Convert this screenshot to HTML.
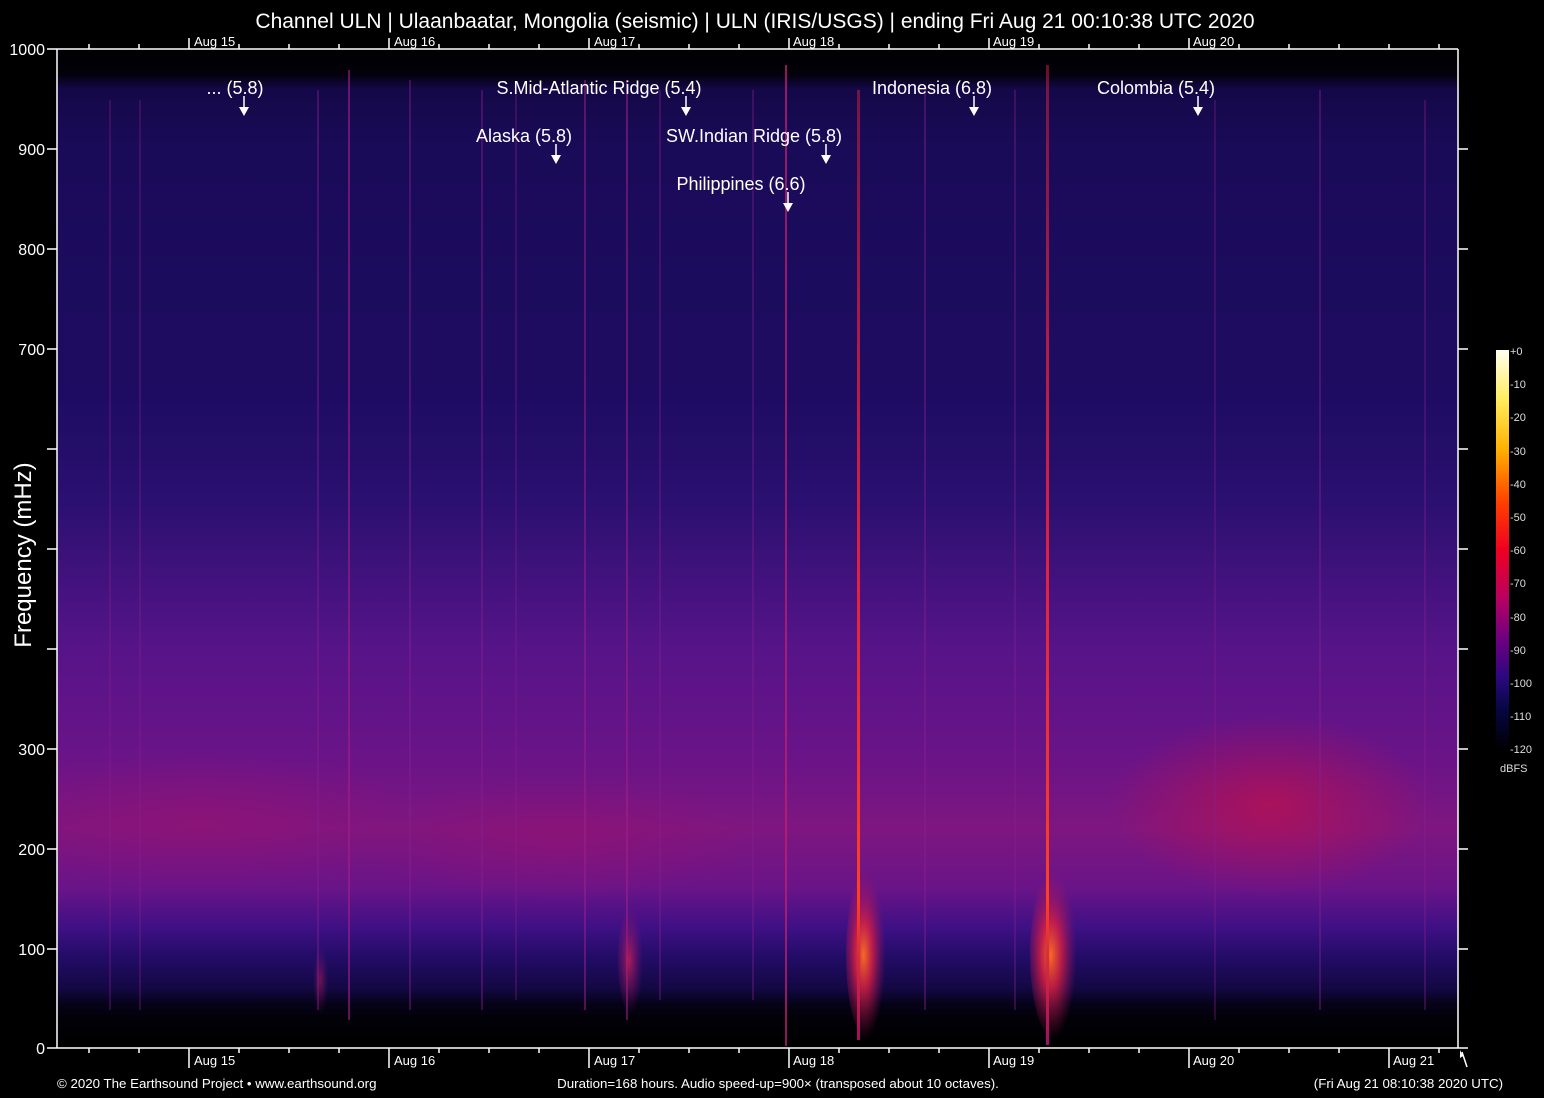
<!DOCTYPE html>
<html><head><meta charset="utf-8"><style>
html,body{margin:0;padding:0;background:#000;width:1544px;height:1098px;overflow:hidden}
svg{display:block}
text{font-family:"Liberation Sans",Arial,sans-serif;fill:#fff}
</style></head><body>
<svg width="1544" height="1098" viewBox="0 0 1544 1098" xmlns="http://www.w3.org/2000/svg">
<defs>
<clipPath id="pc"><rect x="57" y="49" width="1401" height="999"/></clipPath>
<linearGradient id="bg" x1="0" y1="49" x2="0" y2="1048" gradientUnits="userSpaceOnUse">
<stop offset="0" stop-color="#000"/>
<stop offset="0.025" stop-color="#03010a"/>
<stop offset="0.04" stop-color="#140848"/>
<stop offset="0.1" stop-color="#1a0b58"/>
<stop offset="0.35" stop-color="#1e0c62"/>
<stop offset="0.45" stop-color="#2a1070"/>
<stop offset="0.6" stop-color="#561488"/>
<stop offset="0.71" stop-color="#6a1488"/>
<stop offset="0.78" stop-color="#7e1680"/>
<stop offset="0.84" stop-color="#6a1488"/>
<stop offset="0.88" stop-color="#3e1084"/>
<stop offset="0.91" stop-color="#220c66"/>
<stop offset="0.94" stop-color="#140844"/>
<stop offset="0.955" stop-color="#06031a"/>
<stop offset="0.97" stop-color="#020108"/>
<stop offset="1" stop-color="#000"/>
</linearGradient>
<radialGradient id="blob" cx="0.5" cy="0.5" r="0.5">
<stop offset="0" stop-color="#c0104a" stop-opacity="0.7"/>
<stop offset="1" stop-color="#c0104a" stop-opacity="0"/>
</radialGradient>
<radialGradient id="blob2" cx="0.5" cy="0.5" r="0.5">
<stop offset="0" stop-color="#a0106a" stop-opacity="0.4"/>
<stop offset="1" stop-color="#a0106a" stop-opacity="0"/>
</radialGradient>
<radialGradient id="hot" cx="0.4" cy="0.5" r="0.5">
<stop offset="0" stop-color="#ff7020" stop-opacity="0.95"/>
<stop offset="0.4" stop-color="#e02040" stop-opacity="0.8"/>
<stop offset="1" stop-color="#a01060" stop-opacity="0"/>
</radialGradient>
<radialGradient id="warm" cx="0.4" cy="0.5" r="0.5">
<stop offset="0" stop-color="#c8205a" stop-opacity="0.8"/>
<stop offset="1" stop-color="#8a1070" stop-opacity="0"/>
</radialGradient>
<linearGradient id="cb" x1="0" y1="350" x2="0" y2="750" gradientUnits="userSpaceOnUse">
<stop offset="0" stop-color="#fffff0"/>
<stop offset="0.12" stop-color="#ffee60"/>
<stop offset="0.25" stop-color="#ffb000"/>
<stop offset="0.38" stop-color="#ff4000"/>
<stop offset="0.5" stop-color="#f00020"/>
<stop offset="0.62" stop-color="#b80060"/>
<stop offset="0.72" stop-color="#700080"/>
<stop offset="0.82" stop-color="#2a0880"/>
<stop offset="0.9" stop-color="#060640"/>
<stop offset="1" stop-color="#000"/>
</linearGradient>
<linearGradient id="vl" x1="0" y1="0" x2="0" y2="1">
<stop offset="0" stop-color="#d02040" stop-opacity="0.5"/>
<stop offset="0.5" stop-color="#e02040"/>
<stop offset="0.85" stop-color="#ff4020"/>
<stop offset="1" stop-color="#a01060"/>
</linearGradient>
</defs>

<g clip-path="url(#pc)">
<rect x="57" y="49" width="1401" height="999" fill="url(#bg)"/>
<ellipse cx="1270" cy="805" rx="160" ry="90" fill="url(#blob)"/>
<ellipse cx="200" cy="820" rx="220" ry="70" fill="url(#blob2)"/>
<ellipse cx="560" cy="840" rx="200" ry="60" fill="url(#blob2)"/>

<g stroke-width="2">
<line x1="349" y1="70" x2="349" y2="1020" stroke="#a0208a" stroke-opacity="0.6"/>
<line x1="318" y1="90" x2="318" y2="1010" stroke="#8a2090" stroke-opacity="0.4"/>
<line x1="410" y1="80" x2="410" y2="1010" stroke="#8a2090" stroke-opacity="0.4"/>
<line x1="482" y1="90" x2="482" y2="1010" stroke="#8a2090" stroke-opacity="0.4"/>
<line x1="516" y1="90" x2="516" y2="1000" stroke="#8a2090" stroke-opacity="0.3"/>
<line x1="585" y1="80" x2="585" y2="1010" stroke="#a0208a" stroke-opacity="0.5"/>
<line x1="627" y1="80" x2="627" y2="1020" stroke="#a0208a" stroke-opacity="0.55"/>
<line x1="660" y1="90" x2="660" y2="1000" stroke="#8a2090" stroke-opacity="0.35"/>
<line x1="753" y1="90" x2="753" y2="1000" stroke="#8a2090" stroke-opacity="0.35"/>
<line x1="786" y1="65" x2="786" y2="1046" stroke="#c02070" stroke-opacity="0.75"/>
<line x1="925" y1="90" x2="925" y2="1010" stroke="#8a2090" stroke-opacity="0.4"/>
<line x1="1015" y1="90" x2="1015" y2="1010" stroke="#8a2090" stroke-opacity="0.35"/>
<line x1="1320" y1="90" x2="1320" y2="1010" stroke="#8a2090" stroke-opacity="0.4"/>
<line x1="1425" y1="100" x2="1425" y2="1010" stroke="#8a2090" stroke-opacity="0.35"/>
<line x1="110" y1="100" x2="110" y2="1010" stroke="#8a2090" stroke-opacity="0.3"/>
<line x1="140" y1="100" x2="140" y2="1010" stroke="#8a2090" stroke-opacity="0.3"/>
<line x1="1215" y1="100" x2="1215" y2="1020" stroke="#8a2090" stroke-opacity="0.3"/>
</g>
<ellipse cx="632" cy="960" rx="14" ry="55" fill="url(#warm)"/>
<ellipse cx="322" cy="980" rx="8" ry="35" fill="url(#warm)" opacity="0.6"/>
<ellipse cx="868" cy="955" rx="22" ry="85" fill="url(#hot)"/>
<ellipse cx="1056" cy="955" rx="26" ry="85" fill="url(#hot)"/>
<rect x="857" y="90" width="3" height="950" fill="url(#vl)"/>
<rect x="1046" y="65" width="3" height="980" fill="url(#vl)"/>
</g>

<g stroke="#fff" stroke-width="1.5" fill="none">
<line x1="57" y1="49" x2="57" y2="1048"/>
<line x1="57" y1="49" x2="1458" y2="49"/>
<line x1="57" y1="1048" x2="1468" y2="1048"/>
<line x1="1458" y1="49" x2="1458" y2="1048"/>
<path d="M47 49H57M47 149H57M47 249H57M47 349H57M47 449H57M47 549H57M47 649H57M47 749H57M47 849H57M47 949H57M47 1048H57"/>
<path d="M1458 149H1468M1458 249H1468M1458 349H1468M1458 449H1468M1458 549H1468M1458 649H1468M1458 749H1468M1458 849H1468M1458 949H1468"/>
<path d="M89 49V44M139 49V44M239 49V44M289 49V44M339 49V44M439 49V44M489 49V44M539 49V44M639 49V44M689 49V44M739 49V44M839 49V44M889 49V44M939 49V44M1039 49V44M1089 49V44M1139 49V44M1239 49V44M1289 49V44M1339 49V44M1389 49V44M1439 49V44"/>
<path d="M189 49V38M389 49V38M589 49V38M789 49V38M989 49V38M1189 49V38"/>
<path d="M89 1048V1053M139 1048V1053M239 1048V1053M289 1048V1053M339 1048V1053M439 1048V1053M489 1048V1053M539 1048V1053M639 1048V1053M689 1048V1053M739 1048V1053M839 1048V1053M889 1048V1053M939 1048V1053M1039 1048V1053M1089 1048V1053M1139 1048V1053M1239 1048V1053M1289 1048V1053M1339 1048V1053M1439 1048V1053"/>
<path d="M189 1048V1068M389 1048V1068M589 1048V1068M789 1048V1068M989 1048V1068M1189 1048V1068M1389 1048V1068"/>
<path d="M1462 1052L1467 1067"/>
</g>
<path d="M1460 1050l0 8l3 -2z" fill="#fff"/>

<text x="755" y="28" font-size="21" text-anchor="middle">Channel ULN | Ulaanbaatar, Mongolia (seismic) | ULN (IRIS/USGS) | ending Fri Aug 21 00:10:38 UTC 2020</text>

<g font-size="13">
<text x="194" y="46">Aug 15</text><text x="394" y="46">Aug 16</text><text x="594" y="46">Aug 17</text>
<text x="793" y="46">Aug 18</text><text x="993" y="46">Aug 19</text><text x="1193" y="46">Aug 20</text>
<text x="194" y="1065">Aug 15</text><text x="394" y="1065">Aug 16</text><text x="594" y="1065">Aug 17</text>
<text x="793" y="1065">Aug 18</text><text x="993" y="1065">Aug 19</text><text x="1193" y="1065">Aug 20</text><text x="1393" y="1065">Aug 21</text>
</g>
<g font-size="13.3">
<text x="57" y="1088">© 2020 The Earthsound Project • www.earthsound.org</text>
<text x="778" y="1088" text-anchor="middle">Duration=168 hours. Audio speed-up=900× (transposed about 10 octaves).</text>
<text x="1503" y="1088" text-anchor="end">(Fri Aug 21 08:10:38 2020 UTC)</text>
</g>

<g font-size="16" text-anchor="end">
<text x="45" y="55">1000</text><text x="45" y="155">900</text><text x="45" y="255">800</text><text x="45" y="355">700</text>
<text x="45" y="755">300</text><text x="45" y="855">200</text><text x="45" y="955">100</text><text x="45" y="1054">0</text>
</g>
<text transform="translate(31,555) rotate(-90)" font-size="24" text-anchor="middle">Frequency (mHz)</text>

<g font-size="18" text-anchor="middle">
<text x="235" y="94">... (5.8)</text>
<text x="599" y="94">S.Mid-Atlantic Ridge (5.4)</text>
<text x="932" y="94">Indonesia (6.8)</text>
<text x="1156" y="94">Colombia (5.4)</text>
<text x="524" y="142">Alaska (5.8)</text>
<text x="754" y="142">SW.Indian Ridge (5.8)</text>
<text x="741" y="190">Philippines (6.6)</text>
</g>
<g stroke="#fff" stroke-width="1.5">
<line x1="244" y1="96" x2="244" y2="108"/><line x1="686" y1="96" x2="686" y2="108"/>
<line x1="974" y1="96" x2="974" y2="108"/><line x1="1198" y1="96" x2="1198" y2="108"/>
<line x1="556" y1="144" x2="556" y2="156"/><line x1="826" y1="144" x2="826" y2="156"/>
<line x1="788" y1="192" x2="788" y2="204"/>
</g>
<g fill="#fff">
<path d="M239 107h10l-5 9z"/><path d="M681 107h10l-5 9z"/><path d="M969 107h10l-5 9z"/><path d="M1193 107h10l-5 9z"/>
<path d="M551 155h10l-5 9z"/><path d="M821 155h10l-5 9z"/><path d="M783 203h10l-5 9z"/>
</g>

<rect x="1496" y="350" width="13" height="400" fill="url(#cb)"/>
<g font-size="11">
<text x="1510" y="355" style="fill:#ddd">+0</text>
<text x="1510" y="388" style="fill:#ddd">-10</text>
<text x="1510" y="421" style="fill:#ddd">-20</text>
<text x="1510" y="455" style="fill:#ddd">-30</text>
<text x="1510" y="488" style="fill:#ddd">-40</text>
<text x="1510" y="521" style="fill:#ddd">-50</text>
<text x="1510" y="554" style="fill:#ddd">-60</text>
<text x="1510" y="587" style="fill:#ddd">-70</text>
<text x="1510" y="621" style="fill:#ddd">-80</text>
<text x="1510" y="654" style="fill:#ddd">-90</text>
<text x="1510" y="687" style="fill:#ddd">-100</text>
<text x="1510" y="720" style="fill:#ddd">-110</text>
<text x="1510" y="753" style="fill:#ddd">-120</text>
<text x="1500" y="772" style="fill:#ddd">dBFS</text>
</g>
</svg>
</body></html>
